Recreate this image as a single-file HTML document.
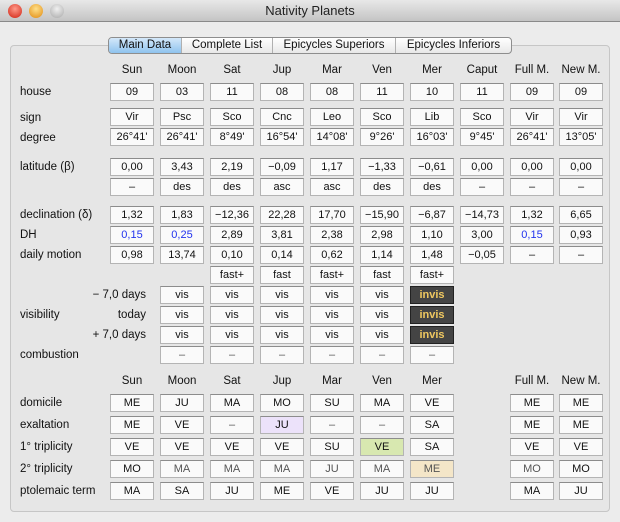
<!DOCTYPE html>
<html><head><meta charset="utf-8"><style>
*{margin:0;padding:0;box-sizing:border-box}
body{width:620px;height:522px;background:#ececec;font-family:"Liberation Sans",sans-serif;font-size:11px;color:#111;position:relative;overflow:hidden}
.tb{position:absolute;left:0;top:0;width:620px;height:22px;background:linear-gradient(#e8e8e8,#c4c4c4);border-bottom:1px solid #8a8a8a;text-align:center;font-size:13px;line-height:22px;color:#222}
.dot{position:absolute;top:4px;width:14px;height:14px;border-radius:50%}
.panel{position:absolute;left:10px;top:45px;width:600px;height:467px;background:#e6e6e6;border:1px solid #c6c6c6;border-radius:4px}
.tabs{position:absolute;left:108px;top:37px;width:404px;height:17px;display:flex;border:1px solid #8e8e8e;border-radius:4px;background:linear-gradient(#fff,#e8e8e8);overflow:hidden}
.tabs div{line-height:15px;font-size:11.5px;border-left:1px solid #b0b0b0;text-align:center}
.tabs div:first-child{border-left:none;background:linear-gradient(#d4e8fa,#8fc3ee);}
.r{position:absolute;left:0;width:620px;height:18px}
.r>div{position:absolute;top:0;width:44px;height:18px;line-height:16px;text-align:center;background:#fafafa;border:1px solid #b4b4b4;border-top-color:#8c8c8c}
.r>div.h{background:none;border:none;line-height:18px;font-size:11.5px}
.l{position:absolute;left:20px;line-height:18px;font-size:11.5px}
.sl{position:absolute;right:474px;line-height:18px;font-size:11.5px}
.c0{left:110px}.c1{left:160px}.c2{left:210px}.c3{left:260px}.c4{left:310px}.c5{left:360px}.c6{left:410px}.c7{left:460px}.c8{left:510px}.c9{left:559px}
.b{color:#2233ee}
.iv{background:#444!important;color:#f0c860;font-weight:bold;border-color:#222!important}
.g{color:#555}
</style></head><body>
<div class="tb">Nativity Planets
<div class="dot" style="left:8px;background:radial-gradient(circle at 50% 35%,#ff9a8a,#d02010)"></div>
<div class="dot" style="left:29px;background:radial-gradient(circle at 50% 35%,#ffe08a,#e08a10)"></div>
<div class="dot" style="left:50px;background:radial-gradient(circle at 50% 35%,#f0f0f0,#a8a8a8)"></div>
</div>
<div class="panel"></div>
<div class="tabs"><div style="width:72px">Main Data</div><div style="width:91px">Complete List</div><div style="width:123px">Epicycles Superiors</div><div style="width:116px">Epicycles Inferiors</div></div>

<div class="r" style="top:61px"><div class="h c0">Sun</div><div class="h c1">Moon</div><div class="h c2">Sat</div><div class="h c3">Jup</div><div class="h c4">Mar</div><div class="h c5">Ven</div><div class="h c6">Mer</div><div class="h c7">Caput</div><div class="h c8">Full M.</div><div class="h c9">New M.</div></div>

<span class="l" style="top:83px">house</span>
<div class="r" style="top:83px"><div class="c0">09</div><div class="c1">03</div><div class="c2">11</div><div class="c3">08</div><div class="c4">08</div><div class="c5">11</div><div class="c6">10</div><div class="c7">11</div><div class="c8">09</div><div class="c9">09</div></div>
<span class="l" style="top:109px">sign</span>
<div class="r" style="top:108px"><div class="c0">Vir</div><div class="c1">Psc</div><div class="c2">Sco</div><div class="c3">Cnc</div><div class="c4">Leo</div><div class="c5">Sco</div><div class="c6">Lib</div><div class="c7">Sco</div><div class="c8">Vir</div><div class="c9">Vir</div></div>
<span class="l" style="top:129px">degree</span>
<div class="r" style="top:128px"><div class="c0">26°41'</div><div class="c1">26°41'</div><div class="c2">8°49'</div><div class="c3">16°54'</div><div class="c4">14°08'</div><div class="c5">9°26'</div><div class="c6">16°03'</div><div class="c7">9°45'</div><div class="c8">26°41'</div><div class="c9">13°05'</div></div>

<span class="l" style="top:158px">latitude (β)</span>
<div class="r" style="top:158px"><div class="c0">0,00</div><div class="c1">3,43</div><div class="c2">2,19</div><div class="c3">−0,09</div><div class="c4">1,17</div><div class="c5">−1,33</div><div class="c6">−0,61</div><div class="c7">0,00</div><div class="c8">0,00</div><div class="c9">0,00</div></div>
<div class="r" style="top:178px"><div class="c0">–</div><div class="c1">des</div><div class="c2">des</div><div class="c3">asc</div><div class="c4">asc</div><div class="c5">des</div><div class="c6">des</div><div class="c7">–</div><div class="c8">–</div><div class="c9">–</div></div>

<span class="l" style="top:206px">declination (δ)</span>
<div class="r" style="top:206px"><div class="c0">1,32</div><div class="c1">1,83</div><div class="c2">−12,36</div><div class="c3">22,28</div><div class="c4">17,70</div><div class="c5">−15,90</div><div class="c6">−6,87</div><div class="c7">−14,73</div><div class="c8">1,32</div><div class="c9">6,65</div></div>
<span class="l" style="top:226px">DH</span>
<div class="r" style="top:226px"><div class="c0 b">0,15</div><div class="c1 b">0,25</div><div class="c2">2,89</div><div class="c3">3,81</div><div class="c4">2,38</div><div class="c5">2,98</div><div class="c6">1,10</div><div class="c7">3,00</div><div class="c8 b">0,15</div><div class="c9">0,93</div></div>
<span class="l" style="top:246px">daily motion</span>
<div class="r" style="top:246px"><div class="c0">0,98</div><div class="c1">13,74</div><div class="c2">0,10</div><div class="c3">0,14</div><div class="c4">0,62</div><div class="c5">1,14</div><div class="c6">1,48</div><div class="c7">−0,05</div><div class="c8">–</div><div class="c9">–</div></div>
<div class="r" style="top:266px"><div class="c2">fast+</div><div class="c3">fast</div><div class="c4">fast+</div><div class="c5">fast</div><div class="c6">fast+</div></div>

<span class="sl" style="top:286px">− 7,0 days</span>
<div class="r" style="top:286px"><div class="c1">vis</div><div class="c2">vis</div><div class="c3">vis</div><div class="c4">vis</div><div class="c5">vis</div><div class="c6 iv">invis</div></div>
<span class="l" style="top:306px">visibility</span><span class="sl" style="top:306px">today</span>
<div class="r" style="top:306px"><div class="c1">vis</div><div class="c2">vis</div><div class="c3">vis</div><div class="c4">vis</div><div class="c5">vis</div><div class="c6 iv">invis</div></div>
<span class="sl" style="top:326px">+ 7,0 days</span>
<div class="r" style="top:326px"><div class="c1">vis</div><div class="c2">vis</div><div class="c3">vis</div><div class="c4">vis</div><div class="c5">vis</div><div class="c6 iv">invis</div></div>
<span class="l" style="top:346px">combustion</span>
<div class="r" style="top:346px"><div class="c1 g">–</div><div class="c2 g">–</div><div class="c3 g">–</div><div class="c4 g">–</div><div class="c5 g">–</div><div class="c6 g">–</div></div>

<div class="r" style="top:372px"><div class="h c0">Sun</div><div class="h c1">Moon</div><div class="h c2">Sat</div><div class="h c3">Jup</div><div class="h c4">Mar</div><div class="h c5">Ven</div><div class="h c6">Mer</div><div class="h c8">Full M.</div><div class="h c9">New M.</div></div>

<span class="l" style="top:394px">domicile</span>
<div class="r" style="top:394px"><div class="c0">ME</div><div class="c1">JU</div><div class="c2">MA</div><div class="c3">MO</div><div class="c4">SU</div><div class="c5">MA</div><div class="c6">VE</div><div class="c8">ME</div><div class="c9">ME</div></div>
<span class="l" style="top:416px">exaltation</span>
<div class="r" style="top:416px"><div class="c0">ME</div><div class="c1">VE</div><div class="c2 g">–</div><div class="c3" style="background:#ece2fa">JU</div><div class="c4 g">–</div><div class="c5 g">–</div><div class="c6">SA</div><div class="c8">ME</div><div class="c9">ME</div></div>
<span class="l" style="top:438px">1° triplicity</span>
<div class="r" style="top:438px"><div class="c0">VE</div><div class="c1">VE</div><div class="c2">VE</div><div class="c3">VE</div><div class="c4">SU</div><div class="c5" style="background:#d8e8b0">VE</div><div class="c6">SA</div><div class="c8">VE</div><div class="c9">VE</div></div>
<span class="l" style="top:460px">2° triplicity</span>
<div class="r" style="top:460px"><div class="c0">MO</div><div class="c1 g">MA</div><div class="c2 g">MA</div><div class="c3 g">MA</div><div class="c4 g">JU</div><div class="c5 g">MA</div><div class="c6 g" style="background:#f4e6c8">ME</div><div class="c8 g">MO</div><div class="c9">MO</div></div>
<span class="l" style="top:482px">ptolemaic term</span>
<div class="r" style="top:482px"><div class="c0">MA</div><div class="c1">SA</div><div class="c2">JU</div><div class="c3">ME</div><div class="c4">VE</div><div class="c5">JU</div><div class="c6">JU</div><div class="c8">MA</div><div class="c9">JU</div></div>
</body></html>
